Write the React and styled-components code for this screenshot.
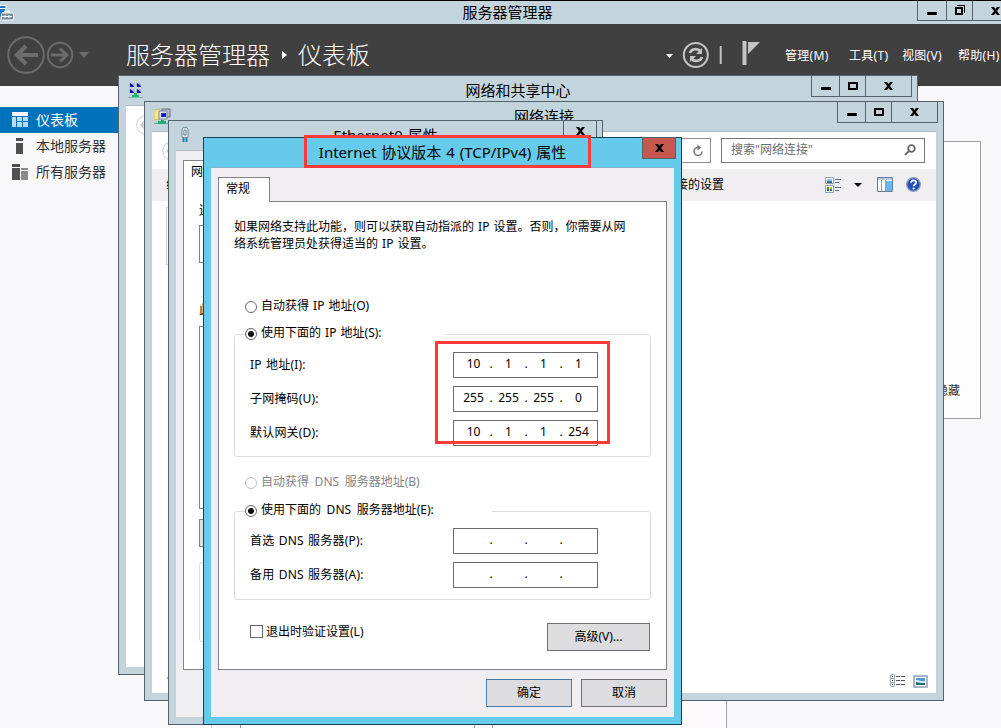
import React from 'react'
import styled, { createGlobalStyle } from 'styled-components'

const sans = '"Noto Sans", "Noto Sans CJK SC", sans-serif'

const GlobalStyle = createGlobalStyle`
  * { box-sizing: border-box; }

  body {
    margin: 0;
    overflow: hidden;
    font-family: ${sans};
    font-size: 12px;
    line-height: 16px;
    word-spacing: 1px;
    color: #000;
  }
`

const Desktop = styled.div`
  position: relative;
  width: 1001px;
  height: 728px;
  overflow: hidden;
  background: #f8f7fa;
  border-top: 1px solid #000;
  white-space: nowrap;
`

/* windows */

const WindowFrame = styled.section`
  position: absolute;
  left: ${p => p.$x}px;
  top: ${p => p.$y - 1}px;
  width: ${p => p.$w}px;
  height: ${p => p.$h}px;
  display: flex;
  flex-direction: column;
  padding: 0 7px 7px;
  border: 1px solid ${p => (p.$active ? '#174150' : '#55626b')};
  background: ${p => (p.$active ? '#66cbea' : '#c3d4dd')};
`

const TitleBar = styled.header`
  flex: none;
  display: grid;
  grid-template-columns: 1fr auto 1fr;
  height: 29px;
  margin: 0 -2px;
`

const TitleIcon = styled.span`
  padding: 6px 0 0 4px;

  & svg { display: block; }
`

const Title = styled.h1`
  margin: 0;
  font-size: 15px;
  font-weight: 400;
  line-height: 29px;
`

const Controls = styled.div`
  display: flex;
  justify-self: end;
  height: ${p => p.$height || 22}px;
  margin-top: -1px;
  border: 1px solid #55626b;
`

const Control = styled.span`
  display: flex;
  align-items: center;
  justify-content: center;
  width: ${p => p.$w}px;
  background: ${p => (p.$red ? '#c75850' : 'transparent')};

  & + & { border-left: 1px solid #55626b; }
`

const Client = styled.div`
  flex: 1;
  min-height: 0;
  overflow: hidden;
  background: ${p => (p.$gray ? '#f0eef1' : '#fff')};
  border-top: 1px solid ${p => (p.$active ? '#85b9cb' : '#abbbc4')};
  padding: ${p => p.$pad || 0};
`

/* server manager */

const MainTitle = styled.div`
  display: grid;
  grid-template-columns: 1fr auto 1fr;
  width: 1019px;
  height: 23px;
  background: #c3d4dd;

  & ${Title} {
    line-height: 23px;
    margin-right: 4px;
  }
`

const Header = styled.div`
  display: flex;
  align-items: center;
  height: 62px;
  background: #404040;
  color: #fff;
`

const Crumbs = styled.div`
  display: flex;
  align-items: center;
  width: 575px;
  padding-left: 33px;
  font-size: 24px;
  font-weight: 300;
  line-height: 62px;

  & svg { margin: 0 11px 0 12px; }
`

const MenuItem = styled.span`
  width: ${p => p.$w}px;
  padding-top: 1px;
  letter-spacing: .3px;
`

const Body = styled.div`
  display: flex;
  height: 642px;
`

const Sidebar = styled.nav`
  width: 212px;
  padding-top: 21px;
  border-right: 1px solid #dddcdf;
`

const NavItem = styled.div`
  display: flex;
  align-items: center;
  height: 26px;
  padding-left: 11px;
  font-size: 14px;
  color: ${p => (p.$on ? '#fff' : '#333')};
  background: ${p => (p.$on ? '#0072bc' : 'transparent')};

  & svg { margin-right: 8px; }
`

const Main = styled.main`
  flex: 1;
  padding: 55px 20px 0 28px;
`

const Welcome = styled.div`
  display: flex;
  justify-content: flex-end;
  align-items: flex-end;
  height: 278px;
  padding: 0 20px 19px;
  border: 1px solid #a0a0a3;
  background: #fdfdfe;
  color: #333;
`

const Tiles = styled.div`
  display: flex;
  gap: 17px;
  margin-top: 250px;
`

const Tile = styled.div`
  width: 235px;
  height: 80px;
  border: 1px solid #a0a0a3;
  background: #fcfafc;
`

/* explorer windows */

const NavBar = styled.div`
  display: flex;
  align-items: center;
  height: 37px;
  padding: 0 11px 0 10px;

  & > svg { flex: none; }
`

const Address = styled.div`
  display: flex;
  flex: 1;
  align-items: center;
  justify-content: flex-end;
  height: 25px;
  margin: 0 10px 0 30px;
  padding-right: 6px;
  border: 1px solid #8b8b8d;
`

const Search = styled.div`
  display: flex;
  align-items: center;
  justify-content: space-between;
  width: 204px;
  height: 25px;
  padding: 0 8px 1px 9px;
  border: 1px solid #77777a;
  color: #6d6d6d;
`

const CommandBar = styled.div`
  display: flex;
  align-items: center;
  height: 32px;
  padding: 0 15px 1px 14px;
  background: #f0eef0;
`

const Organize = styled.span`
  width: 462px;
`

const CommandIcons = styled.span`
  display: flex;
  align-items: center;
  margin-left: auto;
`

const FileArea = styled.div`
  height: 471px;
  padding: 6px 0 0 14px;
`

const FileItem = styled.div`
  width: 230px;
  height: 58px;
  border: 1px solid #ccced2;
`

const StatusBar = styled.div`
  display: flex;
  align-items: center;
  height: 18px;
  padding: 0 8px 0 14px;

  & svg:first-of-type { margin-left: auto; }
  & svg + svg { margin-left: 7px; }
`

/* dialogs */

const Tab = styled.div`
  position: relative;
  width: ${p => p.$w}px;
  height: 25px;
  margin-bottom: -1px;
  padding: 3px 0 0 7px;
  border: 1px solid #828287;
  border-bottom: 0;
  background: #fff;
`

const TabPage = styled.div`
  height: ${p => p.$h}px;
  padding: ${p => p.$pad};
  border: 1px solid #828287;
  background: #fff;
`

const Intro = styled.p`
  margin: 0 0 47px;
  line-height: 17px;
`

const Choice = styled.div`
  display: flex;
  align-items: center;
  gap: 4px;
  height: 15px;
  margin-left: ${p => p.$indent || 0}px;
  color: ${p => (p.$disabled ? '#838383' : '#000')};
  line-height: 15px;
  word-spacing: ${p => p.$gap || 1}px;

  & span { margin-top: -3px; }
`

const RadioMark = styled.i`
  flex: none;
  width: 12px;
  height: 12px;
  border: 1px solid ${p => (p.$disabled ? '#bcbcbc' : '#666')};
  border-radius: 50%;
  background: ${p => (p.$on ? 'radial-gradient(circle, #111 0 2.6px, #fff 3.4px)' : '#fff')};
`

const CheckMark = styled.i`
  width: 13px;
  height: 13px;
  border: 1px solid #666;
`

const Group = styled.fieldset`
  width: 417px;
  height: ${p => p.$h}px;
  min-width: 0;
  margin: ${p => p.$margin};
  padding: ${p => p.$pad || 10}px 10px 0;
  border: 1px solid #d9dde1;
  border-radius: 3px;
`

const Legend = styled.legend`
  width: ${p => p.$w}px;
  height: 15px;
  padding: 0;

  & ${Choice} { margin-top: -1px; }
`

const Field = styled.div`
  display: flex;
  height: 26px;
  margin: 0 0 8px 5px;
`

const FieldLabel = styled.label`
  width: 203px;
  line-height: 25px;
  letter-spacing: .2px;
`

const IpBox = styled.div`
  display: flex;
  width: 145px;
  height: 26px;
  padding-left: 4px;
  border: 1px solid #6b6b6f;
  background: #fff;
  line-height: 22px;
`

const Octet = styled.span`
  width: 31px;
  text-align: center;
`

const Dot = styled.span`
  width: 4px;
  text-align: center;
`

const Button = styled.button`
  width: ${p => p.$w || 86}px;
  height: 28px;
  padding: 0;
  border: 1px solid ${p => (p.$primary ? '#4a7ba6' : '#707073')};
  border-radius: 0;
  background: #dddddf;
  color: #000;
  font: 12px/16px ${sans};
`

const OptionsRow = styled.div`
  display: flex;
  align-items: flex-start;
  justify-content: space-between;
  width: 400px;
  margin: 23px 0 0 16px;

  & ${Choice} {
    gap: 3px;
    margin-top: 1px;
  }

  & ${Choice} span { margin-top: -1px; }
`

const Footer = styled.div`
  display: flex;
  justify-content: flex-end;
  gap: 9px;
  margin-top: 9px;
`

const AdapterLabel = styled.div`
  height: 16px;
  margin-top: ${p => p.$top}px;
`

const AdapterBox = styled.div`
  height: ${p => p.$h}px;
  margin-top: ${p => p.$top}px;
  border: 1px solid ${p => (p.$light ? '#d9dde1' : '#828287')};
  border-radius: ${p => (p.$light ? 3 : 0)}px;
  background: ${p => (p.$filled ? '#dddddf' : '#fff')};
`

const Marker = styled.div`
  position: absolute;
  left: ${p => p.$x}px;
  top: ${p => p.$y - 1}px;
  width: ${p => p.$w}px;
  height: ${p => p.$h}px;
  border: 3px solid #fc3a3a;
`

/* glyphs */

const MinGlyph = () => (
  <svg width="10" height="20" shapeRendering="crispEdges"><path d="M0 11h10v3H0z" /></svg>
)

const MaxGlyph = () => (
  <svg width="10" height="8" shapeRendering="crispEdges">
    <path d="M1 1h8v6H1z" fill="none" stroke="#000" strokeWidth="2" />
  </svg>
)

const RestoreGlyph = () => (
  <svg width="10" height="12" shapeRendering="crispEdges">
    <path d="M1 3h6v6H1z" fill="none" stroke="#000" strokeWidth="2" />
    <path d="M2 .5h7.5V8" fill="none" stroke="#000" />
  </svg>
)

const CloseGlyph = () => (
  <svg width="9" height="8" viewBox="0 0 9 8">
    <path d="M0 0h3l1.5 2L6 0h3L6 4l3 4H6L4.500 6 3 8H0l3-4z" />
  </svg>
)

const WindowControls = () => (
  <Controls>
    <Control $w={27}><MinGlyph /></Control>
    <Control $w={26}><MaxGlyph /></Control>
    <Control $w={46}><CloseGlyph /></Control>
  </Controls>
)

const HistoryArrows = () => (
  <svg width="93" height="62" fill="none" stroke="#6c6c6c">
    <circle cx="26" cy="31" r="17.800" strokeWidth="2" />
    <path d="M38 31H17M26 22l-9 9 9 9" strokeWidth="4.200" />
    <circle cx="60" cy="31" r="12.200" strokeWidth="2" />
    <path d="M51 31h15M60 24.500l7 6.500-7 6.500" strokeWidth="3" />
    <path d="M79 28h10l-5 6z" fill="#6c6c6c" stroke="none" />
  </svg>
)

const HeaderTools = () => (
  <svg width="117" height="62" viewBox="0 0 117 62" overflow="visible">
    <path d="M-2 30h7l-3.500 4z" fill="#fff" />
    <g fill="none" stroke="#c4c4c4">
      <circle cx="27.800" cy="31" r="12" strokeWidth="2" />
      <path d="M22 29c1-4 7-5.500 11-1.500M34 33c-1 4-7 5.500-11 1.500" strokeWidth="2.600" />
      <path d="M52.700 22v18" strokeWidth="2" />
    </g>
    <path d="M34 24v6h-6zM22 38v-6h6zM74.500 17h4v24h-4zM80 18h12L80 30z" fill="#c4c4c4" />
  </svg>
)

const BackCircle = () => (
  <svg width="20" height="20" fill="none" stroke="#c9c9cc">
    <circle cx="10" cy="10" r="9.300" />
    <path d="M9 6l-4 4 4 4M5 10h10" strokeWidth="1.500" />
  </svg>
)

const ServerIcon = () => (
  <svg width="14" height="16" viewBox="0 0 14 16" style={{ display: 'block', marginTop: 4 }}>
    <path d="M0 0h6v3H0zM0 4h5v3H3L0 13z" fill="#1979ca" />
    <path d="M0 .5h6v3H0" fill="none" stroke="#fff" />
    <rect x="1.500" y="8" width="12" height="7" rx="1" fill="#758b9b" stroke="#fff" />
    <path d="M4.500 8V6h5v2M2 11.500h10M5 10v3M9 10v3" stroke="#fff" fill="none" />
  </svg>
)

const DashboardIcon = () => (
  <svg width="17" height="16" shapeRendering="crispEdges">
    <path d="M1 0h16v4H1z" fill="#fff" />
    <path d="M1 5h4v10H1zM6 5h5v4H6zM12 5h5v4h-5zM6 10h5v5H6zM12 10h5v5h-5z" fill="#b5dcf3" />
  </svg>
)

const LocalIcon = () => (
  <svg width="17" height="16" shapeRendering="crispEdges">
    <path d="M5 0h7v3H5zM5 5h7v11H5z" fill="#505050" />
  </svg>
)

const AllServersIcon = () => (
  <svg width="17" height="16" shapeRendering="crispEdges">
    <path d="M1 0h8v3H1zM1 4h8v12H1z" fill="#505050" />
    <path d="M10 4h7v2h-7zM10 7h7v9h-7z" fill="#8a8a8a" />
  </svg>
)

const SharingIcon = () => (
  <svg width="16" height="16">
    {[[1, 1], [8, 1], [1, 7], [8, 7]].map(([x, y]) => (
      <g key={`${x}${y}`}>
        <path d={`M${x} ${y}h5v4h-5z`} fill="#a9b5df" />
        <path d={`M${x + 1} ${y}l4 3v1h-4z`} fill="#1010a8" />
      </g>
    ))}
    <path d="M6 11h3v2h2v2.500H4V13h2z" fill="#13bd78" />
    <path d="M0 15.500h4M11 15.500h4" stroke="#9aa7ad" />
  </svg>
)

const ConnectionsIcon = () => (
  <svg width="17" height="17">
    <path d="M0 2l6-1v10l-6 1z" fill="#f7e58a" stroke="#c7ac4d" strokeWidth=".7" />
    <path d="M8 1h8v8H8z" fill="#b7bdc5" stroke="#666f7c" />
    <path d="M5 3h8v8H5z" fill="#dce3f4" stroke="#7985ae" />
    <path d="M7 5h5v4H7z" fill="#1722ba" />
    <path d="M7 12h3v1h2v3H4v-3h3z" fill="#15b674" />
    <path d="M0 15.500h4M12 15.500h3" stroke="#829398" />
  </svg>
)

const EthernetIcon = () => (
  <svg width="14" height="17" fill="none">
    <path d="M4 2.500l1-2h4l1 2v8H4z" fill="#dae4eb" stroke="#7c8d9d" />
    <path d="M6 3h2v5H6z" stroke="#6f8292" fill="#fff" />
    <path d="M5.500 11v4M8.500 11v4" stroke="#1585ae" strokeWidth="2" />
  </svg>
)

const RefreshIcon = () => (
  <svg width="12" height="14" fill="none" stroke="#777" strokeWidth="1.600">
    <path d="M6 3.500A4 4 0 1 0 10 7.500" />
    <path d="M5.500 .5v6l3.500-3z" fill="#777" stroke="none" />
  </svg>
)

const SearchIcon = () => (
  <svg width="12" height="12" fill="none" stroke="#666" strokeWidth="1.800">
    <circle cx="7.500" cy="4.500" r="3.300" />
    <path d="M5 7L1 11" />
  </svg>
)

const ViewIcon = () => (
  <svg width="17" height="16">
    <path d="M.5.5h8v6h-8zM.5 8.500h8v7h-8z" fill="#fff" stroke="#8ba0b8" />
    <path d="M2 4h5v2H2z" fill="#267d83" />
    <path d="M2 2h5v2H2z" fill="#8fc4e6" />
    <path d="M2 10h2v2H2zM5 12h2v2H5z" fill="#27863d" />
    <path d="M5 10h2v2H5z" fill="#d9b228" />
    <path d="M2 12h2v2H2z" fill="#365bab" />
    <path d="M10 2.500h6M10 5.500h4M10 10.500h6M10 13.500h4" stroke="#65718b" />
  </svg>
)

const DownArrow = styled.i`
  margin: 0 15px 0 12px;
  border: 4px solid transparent;
  border-top-color: #000;
  border-bottom: 0;
`

const PaneIcon = () => (
  <svg width="16" height="15">
    <path d="M.5.5h15v14H.5z" fill="#fff" stroke="#68819b" />
    <path d="M1 1h14v2H1z" fill="#b7c8d9" />
    <path d="M9 4h6v10H9z" fill="#66b7ed" />
    <path d="M4.500 3v11M8.500 3v11" stroke="#8ca3b7" />
  </svg>
)

const HelpIcon = () => (
  <svg width="15" height="15" style={{ marginLeft: 13 }}>
    <circle cx="7.500" cy="7.500" r="6.800" fill="#2450b9" stroke="#8b9cc0" strokeWidth="1.300" />
    <path d="M5 5.800c0-3.300 5.200-3.300 5.200-.3 0 1.700-2.500 1.800-2.500 3.800" fill="none" stroke="#fff" strokeWidth="1.700" />
    <circle cx="7.600" cy="11.500" r="1.100" fill="#fff" />
  </svg>
)

const DetailsIcon = () => (
  <svg width="16" height="14" fill="none">
    {[0.5, 4.500, 8.500].map(y => (
      <g key={y}>
        <rect x=".5" y={y} width="4" height="4" rx="1" stroke="#8490a4" />
        <path d={`M6 ${y + 2}h4M11 ${y + 2}h4`} stroke="#4d5670" />
        <path d={`M2 ${y + 2}h1`} stroke="#222" />
      </g>
    ))}
  </svg>
)

const PictureIcon = () => (
  <svg width="15" height="13">
    <path d="M1 1h13v11H1z" fill="#fff" stroke="#8aa0ba" strokeWidth="1.500" />
    <path d="M3 3h9v7H3z" fill="#4b9dce" />
    <path d="M3 5c4 0 5 2 9 1v2H3z" fill="#d7eef1" />
    <path d="M3 7c3 1 6 1 9 1v2H3z" fill="#1c6b73" />
  </svg>
)

const IpInput = ({ value = ['', '', '', ''] }) => (
  <IpBox>
    {value.map((part, i) => (
      <React.Fragment key={i}>
        {i > 0 && <Dot>.</Dot>}
        <Octet>{part}</Octet>
      </React.Fragment>
    ))}
  </IpBox>
)

const Radio = ({ on, disabled, indent, gap, children }) => (
  <Choice $disabled={disabled} $indent={indent} $gap={gap}>
    <RadioMark $on={on} $disabled={disabled} />
    <span>{children}</span>
  </Choice>
)

const addressFields = [
  { label: 'IP 地址(I):', value: ['10', '1', '1', '1'] },
  { label: '子网掩码(U):', value: ['255', '255', '255', '0'] },
  { label: '默认网关(D):', value: ['10', '1', '1', '254'] },
]

const dnsFields = [
  { label: '首选 DNS 服务器(P):' },
  { label: '备用 DNS 服务器(A):' },
]

const Fields = ({ items }) => items.map(({ label, value }) => (
  <Field key={label}>
    <FieldLabel>{label}</FieldLabel>
    <IpInput value={value} />
  </Field>
))

const ServerManager = () => (
  <>
    <MainTitle>
      <ServerIcon />
      <Title>服务器管理器</Title>
      <Controls $height={21}>
        <Control $w={28}><MinGlyph /></Control>
        <Control $w={26}><RestoreGlyph /></Control>
        <Control $w={46}><CloseGlyph /></Control>
      </Controls>
    </MainTitle>
    <Header>
      <HistoryArrows />
      <Crumbs>
        服务器管理器
        <svg width="5" height="8"><path d="M0 0l5 4-5 4z" fill="#fff" /></svg>
        仪表板
      </Crumbs>
      <HeaderTools />
      <MenuItem $w={64}>管理(M)</MenuItem>
      <MenuItem $w={53}>工具(T)</MenuItem>
      <MenuItem $w={56}>视图(V)</MenuItem>
      <MenuItem $w={43}>帮助(H)</MenuItem>
    </Header>
    <Body>
      <Sidebar>
        <NavItem $on><DashboardIcon />仪表板</NavItem>
        <NavItem><LocalIcon />本地服务器</NavItem>
        <NavItem><AllServersIcon />所有服务器</NavItem>
      </Sidebar>
      <Main>
        <Welcome>隐藏</Welcome>
        <Tiles><Tile /><Tile /></Tiles>
      </Main>
    </Body>
  </>
)

const SharingCenter = () => (
  <WindowFrame $x={118} $y={75} $w={800} $h={600}>
    <TitleBar>
      <TitleIcon><SharingIcon /></TitleIcon>
      <Title>网络和共享中心</Title>
      <WindowControls />
    </TitleBar>
    <Client>
      <NavBar><BackCircle /></NavBar>
    </Client>
  </WindowFrame>
)

const Connections = () => (
  <WindowFrame $x={144} $y={101} $w={800} $h={600}>
    <TitleBar>
      <TitleIcon><ConnectionsIcon /></TitleIcon>
      <Title>网络连接</Title>
      <WindowControls />
    </TitleBar>
    <Client>
      <NavBar>
        <BackCircle />
        <Address><RefreshIcon /></Address>
        <Search>搜索"网络连接"<SearchIcon /></Search>
      </NavBar>
      <CommandBar>
        <Organize>组织</Organize>
        更改此连接的设置
        <CommandIcons>
          <ViewIcon />
          <DownArrow />
          <PaneIcon />
          <HelpIcon />
        </CommandIcons>
      </CommandBar>
      <FileArea><FileItem /></FileArea>
      <StatusBar>
        1 个项目
        <DetailsIcon />
        <PictureIcon />
      </StatusBar>
    </Client>
  </WindowFrame>
)

const EthernetDialog = () => (
  <WindowFrame $x={168} $y={120} $w={435} $h={605}>
    <TitleBar>
      <TitleIcon><EthernetIcon /></TitleIcon>
      <Title>Ethernet0 属性</Title>
      <Controls><Control $w={32}><CloseGlyph /></Control></Controls>
    </TitleBar>
    <Client $gray $pad="9px 7px">
      <Tab $w={52}>网络</Tab>
      <TabPage $h={486} $pad="18px 15px">
        <AdapterLabel>连接时使用:</AdapterLabel>
        <AdapterBox $top={6} $h={38} />
        <AdapterLabel $top={39}>此连接使用下列项目(O):</AdapterLabel>
        <AdapterBox $top={8} $h={183} />
        <AdapterBox $top={10} $h={28} $filled />
        <AdapterBox $top={15} $h={80} $light />
      </TabPage>
    </Client>
  </WindowFrame>
)

const Ipv4Dialog = () => (
  <WindowFrame $x={203} $y={137} $w={479} $h={588} $active>
    <TitleBar>
      <span />
      <Title>Internet 协议版本 4 (TCP/IPv4) 属性</Title>
      <Controls><Control $w={32} $red><CloseGlyph /></Control></Controls>
    </TitleBar>
    <Client $gray $active $pad="9px 7px">
      <Tab $w={52}>常规</Tab>
      <TabPage $h={469} $pad="16px 15px 0">
        <Intro>
          如果网络支持此功能，则可以获取自动指派的 IP 设置。否则，你需要从网<br />
          络系统管理员处获得适当的 IP 设置。
        </Intro>
        <Radio indent={11}>自动获得 IP 地址(O)</Radio>
        <Group $h={130} $margin="13px 0 18px">
          <Legend $w={200}><Radio on>使用下面的 IP 地址(S):</Radio></Legend>
          <Fields items={addressFields} />
        </Group>
        <Radio disabled indent={11} gap={2.5}>自动获得 DNS 服务器地址(B)</Radio>
        <Group $h={96} $pad={9} $margin="14px 0 0">
          <Legend $w={247}><Radio on gap={2.5}>使用下面的 DNS 服务器地址(E):</Radio></Legend>
          <Fields items={dnsFields} />
        </Group>
        <OptionsRow>
          <Choice><CheckMark /><span>退出时验证设置(L)</span></Choice>
          <Button $w={103}>高级(V)...</Button>
        </OptionsRow>
      </TabPage>
      <Footer>
        <Button $primary>确定</Button>
        <Button>取消</Button>
      </Footer>
    </Client>
  </WindowFrame>
)

const App = () => (
  <>
    <GlobalStyle />
    <Desktop>
      <ServerManager />
      <SharingCenter />
      <Connections />
      <EthernetDialog />
      <Ipv4Dialog />
      <Marker $x={304} $y={135} $w={287} $h={33} />
      <Marker $x={435} $y={341} $w={175} $h={103} />
    </Desktop>
  </>
)

export default App
